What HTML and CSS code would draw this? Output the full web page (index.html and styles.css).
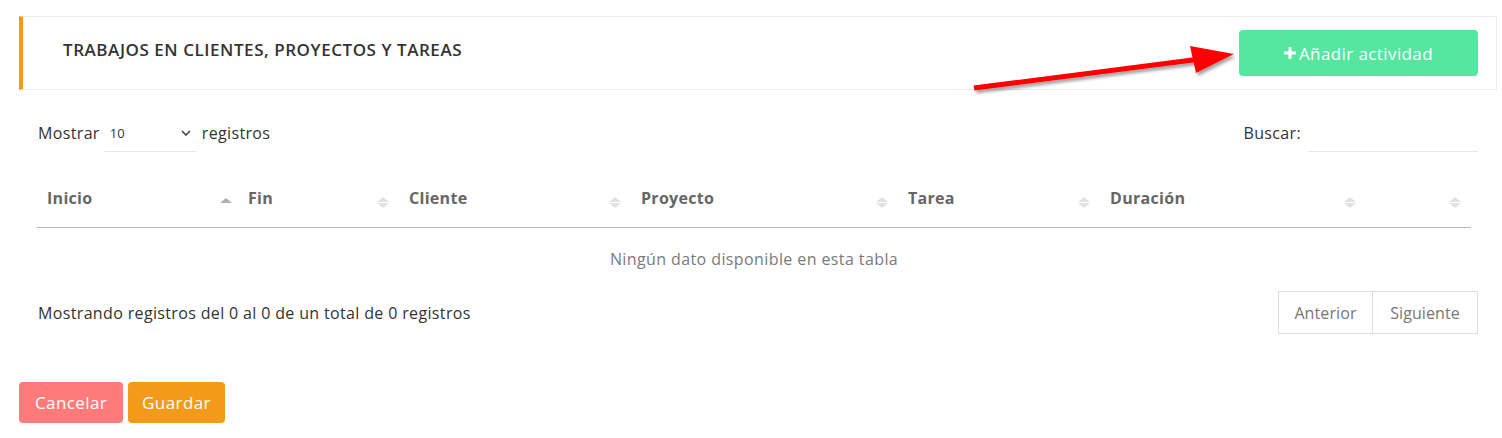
FILE: index.html
```html
<!DOCTYPE html>
<html lang="es">
<head>
<meta charset="utf-8">
<title>Trabajos</title>
<link rel="stylesheet" href="styles.css">
</head>
<body>
<div class="card">
  <h2 class="card-title">TRABAJOS EN CLIENTES, PROYECTOS Y TAREAS</h2>
  <button class="btn btn-add"><svg class="plus" viewBox="0 0 12 12" width="12" height="12"><path d="M4.5 0h3v4.5H12v3H7.5V12h-3V7.5H0v-3h4.5z" fill="#fff"/></svg>Añadir actividad</button>
</div>

<div class="dt">
  <div class="dt-top">
    <label class="dt-length">Mostrar
      <span class="select-wrap">
        <select class="select"><option>10</option><option>25</option><option>50</option><option>100</option></select>
        <svg class="chev" viewBox="0 0 10 6" width="10" height="6"><path d="M1 1l4 4 4-4" fill="none" stroke="#444" stroke-width="1.6"/></svg>
      </span>
      registros</label>
    <label class="dt-filter">Buscar: <input class="search" type="search"></label>
  </div>

  <table class="table">
    <colgroup>
      <col style="width:201px"><col style="width:161px"><col style="width:232px"><col style="width:267px"><col style="width:202px"><col style="width:266px"><col style="width:105px">
    </colgroup>
    <thead>
      <tr>
        <th class="sort-asc">Inicio</th>
        <th class="sort">Fin</th>
        <th class="sort">Cliente</th>
        <th class="sort">Proyecto</th>
        <th class="sort">Tarea</th>
        <th class="sort">Duración</th>
        <th class="sort"></th>
      </tr>
    </thead>
    <tbody>
      <tr><td class="empty" colspan="7">Ningún dato disponible en esta tabla</td></tr>
    </tbody>
  </table>

  <div class="dt-bottom">
    <div class="dt-info">Mostrando registros del 0 al 0 de un total de 0 registros</div>
    <div class="pager">
      <a class="page-btn prev">Anterior</a><a class="page-btn next">Siguiente</a>
    </div>
  </div>
</div>

<div class="actions">
  <button class="btn btn-cancel">Cancelar</button>
  <button class="btn btn-save">Guardar</button>
</div>

<svg class="arrow" width="1502" height="438" viewBox="0 0 1502 438">
  <defs>
    <filter id="sh" x="-10%" y="-50%" width="120%" height="200%">
      <feDropShadow dx="2" dy="3" stdDeviation="1.5" flood-color="#000" flood-opacity="0.35"/>
    </filter>
  </defs>
  <g filter="url(#sh)" fill="#ff0000">
    <polygon points="973.5,85.6 1196,57 1197,62 974.5,90.6"/>
    <polygon points="1190,46 1234,54 1196,73"/>
  </g>
</svg>
</body>
</html>
```

FILE: styles.css
```css
* { box-sizing: border-box; }
html, body { margin: 0; background: #fff; }
body {
  padding: 16px 5px 0 19px;
  font-family: "Open Sans", "Noto Sans", Arial, sans-serif;
  color: #333;
  font-size: 16px;
  letter-spacing: 0.35px;
}
.card {
  height: 74px;
  border: 1px solid #ececec;
  border-left: 4px solid #f39a1a;
  display: flex;
  align-items: center;
  justify-content: space-between;
  padding: 0 18px 0 40px;
}
.card-title {
  margin: 0;
  font-size: 17px;
  font-weight: 600;
  letter-spacing: 0.55px;
  color: #333;
  position: relative;
  top: -4px;
}
.btn {
  border: 0;
  border-radius: 4px;
  color: #fff;
  font-family: inherit;
  font-size: 17px;
  letter-spacing: 0.4px;
  cursor: pointer;
}
.btn-add {
  width: 239px;
  height: 46px;
  background: #55e6a0;
  display: flex;
  align-items: center;
  justify-content: center;
  gap: 3px;
}
.plus { display: block; }
.dt { padding: 0 19px 0 18px; }
.dt-top {
  margin-top: 24px;
  height: 38px;
  display: flex;
  justify-content: space-between;
  align-items: center;
}
.dt-length, .dt-filter {
  display: flex;
  align-items: center;
  height: 38px;
  font-size: 16px;
  color: #333;
}
.dt-length { padding-left: 1px; }
.select-wrap {
  position: relative;
  width: 92px;
  height: 38px;
  margin: 0 6px 0 4px;
}
.select {
  appearance: none;
  -webkit-appearance: none;
  width: 100%;
  height: 38px;
  border: 0;
  border-bottom: 1px solid #e6e6e6;
  background: transparent;
  font-family: inherit;
  font-size: 13px;
  color: #333;
  padding: 0 6px;
  outline: none;
}
.chev {
  position: absolute;
  right: 5px;
  top: 16px;
  pointer-events: none;
}
.search {
  width: 170px;
  height: 38px;
  margin-left: 7px;
  border: 0;
  border-bottom: 1px solid #e6e6e6;
  outline: none;
  font-family: inherit;
}
.table {
  width: 1434px;
  margin-top: 16px;
  border-collapse: collapse;
  table-layout: fixed;
}
.table th {
  position: relative;
  text-align: left;
  font-weight: 700;
  font-size: 16px;
  letter-spacing: 0.3px;
  color: #666;
  line-height: 20px;
  padding: 20px 10px 19px 10px;
  border-bottom: 1px solid #b8b8b8;
}
.table th.sort::before,
.table th.sort::after,
.table th.sort-asc::before {
  content: "";
  position: absolute;
  right: 10px;
  width: 0;
  height: 0;
  border-left: 6px solid transparent;
  border-right: 6px solid transparent;
}
.table th.sort::before {
  top: 29px;
  border-bottom: 5px solid #e2e2e2;
}
.table th.sort::after {
  top: 35px;
  border-top: 5px solid #e2e2e2;
}
.table th.sort-asc::before {
  right: 6px;
  top: 30px;
  border-bottom: 5px solid #b0b0b0;
}
.empty {
  text-align: center;
  padding: 21px 10px 20px;
  line-height: 20px;
  font-size: 16px;
  letter-spacing: 0.4px;
  color: #7a7a7a;
}
.dt-bottom {
  margin-top: 2px;
  display: flex;
  justify-content: space-between;
  align-items: center;
}
.dt-info { font-size: 16px; color: #333; padding-left: 1px; }
.pager {
  display: flex;
  height: 43px;
}
.page-btn {
  display: flex;
  align-items: center;
  justify-content: center;
  border: 1px solid #ddd;
  color: #777;
  font-size: 16px;
  letter-spacing: 0.1px;
  height: 43px;
}
.prev { width: 95px; }
.next { width: 105px; border-left: 0; }
.actions {
  margin-top: 48px;
  display: flex;
  gap: 5px;
}
.btn-cancel { width: 104px; height: 41px; background: #ff7b7b; }
.btn-save { width: 97px; height: 41px; background: #f39a1a; }
.arrow {
  position: absolute;
  left: 0;
  top: 0;
  pointer-events: none;
}
```
